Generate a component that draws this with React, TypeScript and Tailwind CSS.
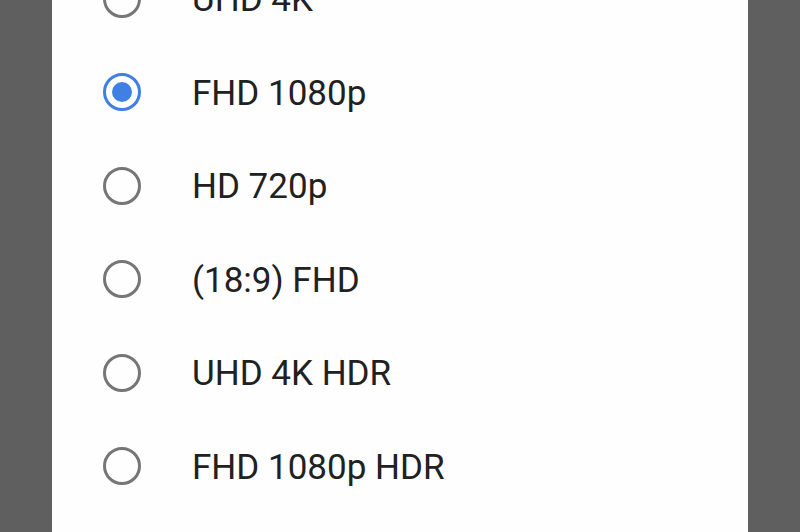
import React, { useState } from 'react';

const OPTIONS = ['UHD 4K', 'FHD 1080p', 'HD 720p', '(18:9) FHD', 'UHD 4K HDR', 'FHD 1080p HDR'];

function Radio({ checked }: { checked: boolean }) {
  return (
    <span
      className={`flex h-[38px] w-[38px] shrink-0 items-center justify-center rounded-full border-[3.5px] ${
        checked ? 'border-[#3f80e4]' : 'border-[#767676]'
      }`}
    >
      {checked && <span className="h-[20px] w-[20px] rounded-full bg-[#3f80e4]" />}
    </span>
  );
}

export default function App() {
  const [selected, setSelected] = useState('FHD 1080p');

  return (
    <div className="flex h-[532px] w-[800px] justify-center overflow-hidden bg-[#5f5f5f]">
      <div className="w-[696px] overflow-hidden bg-[#fefefe] font-['Roboto',sans-serif]">
        <div className="mt-[-48px] flex flex-col">
          {OPTIONS.map((opt) => (
            <button
              key={opt}
              type="button"
              onClick={() => setSelected(opt)}
              className="flex h-[93.5px] items-center pl-[51px] text-left"
            >
              <Radio checked={selected === opt} />
              <span className="ml-[51px] translate-y-[1px] text-[35px] leading-none text-[#212121]">{opt}</span>
            </button>
          ))}
        </div>
      </div>
    </div>
  );
}
